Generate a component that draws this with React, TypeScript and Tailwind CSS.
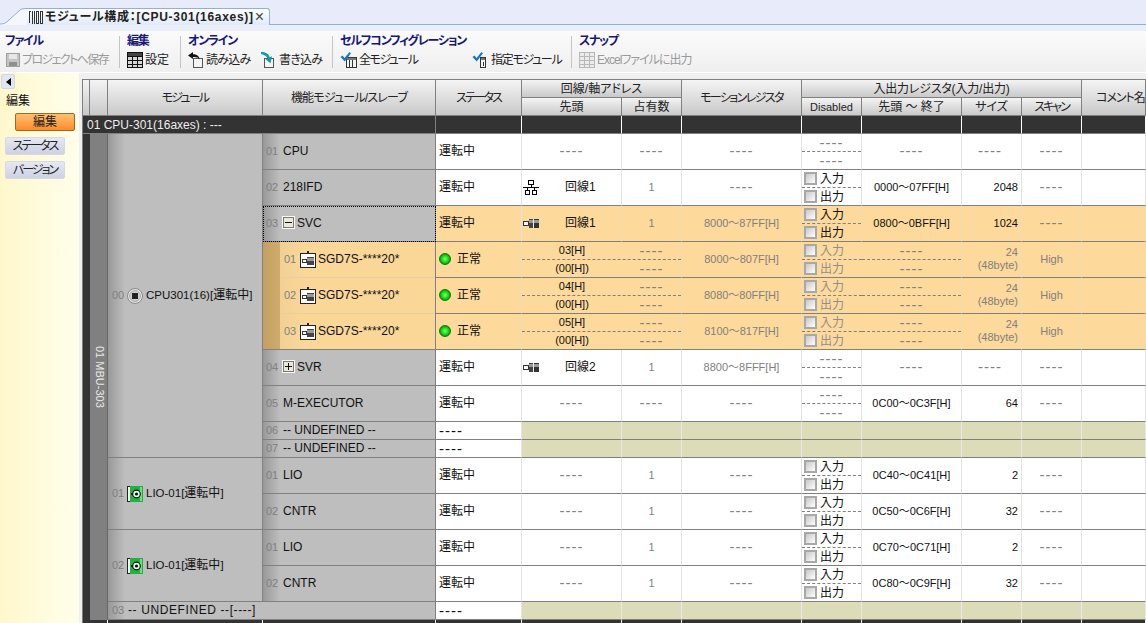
import React from 'react';

type Kind = 'plain' | 'active' | 'sub' | 'lastSub';

const Dash = ({ className = 'text-[#808080]' }: { className?: string }) => (
  <span className={`text-[15px] leading-none tracking-[1px] ${className}`}>----</span>
);

/* ---------- icons ---------- */
const TabIcon = () => (
  <svg width="15" height="13" viewBox="0 0 15 13" shapeRendering="crispEdges" className="shrink-0">
    <path d="M0 0h2v1H1v11H0zM3 0h1v13H3zM5 0h1v13H5zM7 0h3v13H7zM8 1v11h1V1zM11 0h3v13h-3zM12 1v11h1V1z" fill="#333" fillRule="evenodd" />
  </svg>
);
const SaveIcon = () => (
  <svg width="14" height="14" viewBox="0 0 14 14" shapeRendering="crispEdges" className="shrink-0">
    <rect x="0.5" y="0.5" width="13" height="13" fill="#c4c4c4" stroke="#a0a0a0" />
    <rect x="3" y="1" width="8" height="5" fill="#e8e8e8" />
    <rect x="3" y="9" width="8" height="4" fill="#8f8f8f" />
  </svg>
);
const TableIcon = ({ dim = false }: { dim?: boolean }) => (
  <svg width="16" height="16" viewBox="0 0 16 16" shapeRendering="crispEdges" className="shrink-0">
    <rect x="0.5" y="0.5" width="15" height="15" fill={dim ? '#ececec' : '#d8d8d8'} stroke={dim ? '#b8b8b8' : '#111'} />
    <path d="M5.5 1v14M10.5 1v14M1 4.5h14M1 8.5h14M1 12.5h14" stroke={dim ? '#b8b8b8' : '#111'} />
    {!dim && <rect x="1" y="1" width="14" height="3" fill="#444" />}
  </svg>
);
const ReadIcon = () => (
  <svg width="16" height="16" viewBox="0 0 16 16" className="shrink-0">
    <path d="M5.5 6.5h9v9h-9z" fill="#f4f4f4" stroke="#555" shapeRendering="crispEdges" />
    <path d="M0 3.5 5 0v2.2c3.6 0 6.2 1.4 6.6 5.2-1.4-2-3.4-2.6-6.6-2.4V7z" fill="#111" />
  </svg>
);
const WriteIcon = () => (
  <svg width="16" height="16" viewBox="0 0 16 16" className="shrink-0">
    <path d="M3.5 6.5h9v9h-9z" fill="#f4f4f4" stroke="#555" shapeRendering="crispEdges" />
    <path d="M0 0c4.6 0 7.6 1.4 8.8 5.2L11 4.2l-1.4 7-5-3.6 2-.8C5.8 4.4 3.6 2.6 0 2z" fill="#0f9aa8" />
  </svg>
);
const CheckModuleIcon = ({ wide = true }: { wide?: boolean }) => (
  <svg width="17" height="16" viewBox="0 0 17 16" className="shrink-0">
    {wide ? (
      <g shapeRendering="crispEdges">
        <rect x="6.5" y="5.5" width="10" height="10" fill="#f4f4f4" stroke="#333" />
        <path d="M9.5 6v9M12.5 6v9" stroke="#333" />
        <rect x="7" y="6" width="9" height="2" fill="#777" />
      </g>
    ) : (
      <g shapeRendering="crispEdges">
        <rect x="8.5" y="5.5" width="5" height="10" fill="#f4f4f4" stroke="#333" />
        <rect x="9" y="6" width="4" height="2" fill="#777" />
        <path d="M11 10v4" stroke="#333" />
      </g>
    )}
    <path d="M0.5 5 2.5 3.5 4.5 6 9.5 0 11 1.2 4.7 9.5z" fill="#1878c8" />
  </svg>
);
const NetworkIcon = () => (
  <svg width="16" height="15" viewBox="0 0 16 15" shapeRendering="crispEdges" className="shrink-0">
    <path d="M5.5.5h5v4h-5zM2.5 10.5h4v4h-4zM9.5 10.5h4v4h-4z" fill="#fff" stroke="#000" />
    <path d="M8 5v2M0 7.5h16M4.5 8v2M11.5 8v2" stroke="#000" />
  </svg>
);
const PlugIcon = () => (
  <svg width="16" height="9" viewBox="0 0 16 9" shapeRendering="crispEdges" className="shrink-0">
    <rect x="0.5" y="2.5" width="5" height="4" fill="#fff" stroke="#333" />
    <rect x="6" y="0" width="5" height="9" fill="#444" />
    <rect x="11" y="0" width="5" height="9" fill="#333" />
    <rect x="6" y="1" width="10" height="3" fill="#9a9a9a" />
    <path d="M10.5 0v9" stroke="#eee" />
  </svg>
);
const ServoIcon = () => (
  <svg width="16" height="17" viewBox="0 0 16 17" shapeRendering="crispEdges" className="shrink-0">
    <rect x="7" y="0" width="2" height="3" fill="#222" />
    <rect x="0.5" y="2.5" width="15" height="14" rx="1" fill="#fff" stroke="#222" />
    <rect x="2.5" y="8.5" width="4" height="3" fill="#fff" stroke="#333" />
    <rect x="7" y="6" width="7" height="8" fill="#444" />
    <rect x="7" y="7" width="7" height="3" fill="#9a9a9a" />
  </svg>
);
const CpuIcon = () => (
  <svg width="16" height="16" viewBox="0 0 16 16" className="shrink-0">
    <circle cx="8" cy="8" r="7.5" fill="#e8e8e8" stroke="#888" />
    <circle cx="8" cy="8" r="5.5" fill="#d0d0d0" stroke="#aaa" />
    <rect x="5" y="5" width="6" height="6" fill="#222" />
  </svg>
);
const LioIcon = () => (
  <svg width="16" height="16" viewBox="0 0 16 16" className="shrink-0">
    <rect x="3" y="0" width="13" height="16" fill="#22b040" shapeRendering="crispEdges" />
    <rect x="13" y="1" width="2" height="14" fill="#6fdc80" shapeRendering="crispEdges" />
    <path d="M3 .5H.5v15H3" fill="#f4f4f4" stroke="#222" shapeRendering="crispEdges" />
    <circle cx="9.5" cy="8" r="3.8" fill="#e8f8ea" stroke="#111" strokeWidth="1.2" />
    <circle cx="9.5" cy="8" r="1.6" fill="#111" />
    <rect x="4" y="7" width="2" height="2" fill="#111" />
  </svg>
);
const TreeBox = ({ plus = false }: { plus?: boolean }) => (
  <svg width="13" height="13" viewBox="0 0 13 13" shapeRendering="crispEdges" className="shrink-0">
    <rect x="0.5" y="0.5" width="12" height="12" fill="#f0ece2" stroke="#fafafa" />
    <rect x="1.5" y="1.5" width="10" height="10" fill="#ece8dc" stroke="#777" />
    <path d="M3 6.5h7" stroke="#111" />
    {plus && <path d="M6.5 3v7" stroke="#111" />}
  </svg>
);
const Led = () => (
  <span className="w-[12px] h-[12px] rounded-full shrink-0 bg-[radial-gradient(circle,#8cff8c_0%,#22ee22_35%,#0a9a0a_75%,#086a08_100%)] border border-[#0a7a0a]" />
);
const Checkbox = () => (
  <span className="w-[13px] h-[13px] shrink-0 border-2 border-[#a8a8a8] bg-gradient-to-br from-[#c8c8c8] to-white" />
);

/* ---------- top ---------- */
const TabBar = () => (
  <div className="h-[25px] bg-[#e8ecfa] border-b border-[#8fb0d8] flex items-end shrink-0">
    <svg width="27" height="17" viewBox="0 0 27 17" className="shrink-0 -mb-px">
      <path d="M0 16 C4 16 6 15 9 12 L20 2 C21 1 23 0.5 27 0.5 V17 H0z" fill="#f4f8fd" />
      <path d="M0 16 C4 16 6 15 9 12 L20 2 C21 1 23 0.5 27 0.5" fill="none" stroke="#8fb0d8" />
    </svg>
    <div className="w-[243px] h-[17px] -mb-px pl-[2px] flex items-center gap-px border-t border-r border-[#8fb0d8] rounded-tr-[3px] bg-gradient-to-b from-white to-[#dfeaf8] font-bold text-[#222] whitespace-nowrap">
      <TabIcon />
      <span className="tracking-[0.7px]">モジュール構成：[CPU-301(16axes)]</span>
      <span className="text-[#444] font-normal text-[16px] leading-none">×</span>
    </div>
  </div>
);

const RibbonItem = ({ icon, label, dim = false, className = '', textClass = '' }: { icon: React.ReactNode; label: string; dim?: boolean; className?: string; textClass?: string }) => (
  <div className={`flex items-center gap-[2px] h-[18px] whitespace-nowrap ${dim ? 'text-[#9a9a9a]' : 'text-[#222]'} ${className}`}>
    {icon}
    <span className={textClass}>{label}</span>
  </div>
);

const Group = ({ title, className, children }: { title: string; className: string; children: React.ReactNode }) => (
  <div className={`pt-[3px] shrink-0 ${className}`}>
    <div className="h-[14px] leading-[14px] font-bold text-[#17177a] whitespace-nowrap tracking-[-1.2px]">{title}</div>
    <div className="flex mt-[3px]">{children}</div>
  </div>
);

const Sep = () => <div className="w-px h-[32px] mt-[5px] bg-[#c4c4c4] shrink-0" />;

const Ribbon = () => (
  <div className="h-[48px] shrink-0 border-t-[6px] border-[#eaeef9] border-b border-b-white bg-gradient-to-b from-[#fbfbfb] to-[#efefef] flex">
    <Group title="ファイル" className="w-[119px] pl-[5px]">
      <RibbonItem dim icon={<SaveIcon />} label="プロジェクトへ保存" className="ml-[1px]" textClass="tracking-[-1.6px]" />
    </Group>
    <Sep />
    <Group title="編集" className="w-[60px] pl-[7px]">
      <RibbonItem icon={<TableIcon />} label="設定" />
    </Group>
    <Sep />
    <Group title="オンライン" className="w-[151px] pl-[7px]">
      <RibbonItem icon={<ReadIcon />} label="読み込み" className="w-[73px]" textClass="tracking-[-0.7px]" />
      <RibbonItem icon={<WriteIcon />} label="書き込み" className="gap-[1px]" textClass="tracking-[-0.7px]" />
    </Group>
    <Sep />
    <Group title="セルフコンフィグレーション" className="w-[238px] pl-[7px]">
      <RibbonItem icon={<CheckModuleIcon />} label="全モジュール" className="w-[133px] gap-[1px]" textClass="tracking-[-1.5px]" />
      <RibbonItem icon={<CheckModuleIcon wide={false} />} label="指定モジュール" className="-ml-px" textClass="tracking-[-1.3px]" />
    </Group>
    <Sep />
    <Group title="スナップ" className="pl-[7px]">
      <RibbonItem dim icon={<TableIcon dim />} label="Excelファイルに出力" textClass="tracking-[-1px]" />
    </Group>
  </div>
);

const SideButton = ({ label, active = false }: { label: string; active?: boolean }) => (
  <div
    className={`w-[60px] h-[18px] flex items-center justify-center rounded-[2px] border whitespace-nowrap ${
      active
        ? 'ml-[10px] border-[#9a6a2a] bg-gradient-to-b from-[#ffc070] to-[#ff8a24] text-[#222]'
        : 'border-[#d6dae6] bg-gradient-to-b from-[#e6e9f3] to-[#cdd2e2] text-[#222] tracking-[-2px]'
    }`}
  >
    {label}
  </div>
);

const Sidebar = () => (
  <div className="w-[79px] shrink-0 bg-gradient-to-r from-[#fff7cc] to-[#fffeea] pl-[5px]">
    <div className="w-[14px] h-[15px] -ml-[4px] mt-[1px] bg-[#e0e6f2] border border-[#cfd6e6] rounded-[2px] flex items-center justify-center">
      <span className="w-0 h-0 border-y-[4px] border-y-transparent border-r-[5px] border-r-black" />
    </div>
    <div className="mt-[5px] h-[14px] leading-[14px] ml-px text-[#111]">編集</div>
    <div className="flex flex-col gap-[6px] mt-[5px]">
      <SideButton label="編集" active />
      <SideButton label="ステータス" />
      <SideButton label="バージョン" />
    </div>
  </div>
);

/* ---------- grid cells ---------- */
const hd = 'flex items-center justify-center whitespace-nowrap overflow-hidden border-r border-b border-[#808080] bg-gradient-to-b from-[#f4f4f4] to-[#c9c9c9] text-[#222]';

const Header = () => (
  <>
    <div className={`${hd} row-span-2`} />
    <div className={`${hd} row-span-2`} />
    <div className={`${hd} row-span-2 tracking-[-1.8px]`}>モジュール</div>
    <div className={`${hd} row-span-2 tracking-[-0.8px]`}>機能モジュール/スレーブ</div>
    <div className={`${hd} row-span-2 tracking-[-2px]`}>ステータス</div>
    <div className={`${hd} col-span-2`}>回線/軸アドレス</div>
    <div className={`${hd} row-span-2 tracking-[-1.6px]`}>モーションレジスタ</div>
    <div className={`${hd} col-span-4 tracking-[-0.2px]`}>入出力レジスタ(入力/出力)</div>
    <div className={`${hd} row-span-2 !justify-start pl-[14px] tracking-[-1px]`}>コメント名称</div>
    <div className={hd}>先頭</div>
    <div className={hd}>占有数</div>
    <div className={`${hd} text-[11px]`}>Disabled</div>
    <div className={hd}>先頭 ～ 終了</div>
    <div className={hd}>サイズ</div>
    <div className={`${hd} tracking-[-2px]`}>スキャン</div>
  </>
);

const DarkRow = () => (
  <>
    <div className="col-span-4 bg-[#333] border-b border-[#808080] text-[#eee] pl-[4px] flex items-center whitespace-nowrap border-r">
      01 CPU-301(16axes) : ---
    </div>
    {[0, 1, 2, 3, 4, 5, 6, 7, 8].map(i => (
      <div key={i} className="bg-[#333] border-r border-white border-b border-b-[#808080]" />
    ))}
  </>
);

const bandCls = 'w-[17px] shrink-0 self-stretch flex items-center pl-[3px] pb-[2px] text-[11px] text-[#808080] bg-gradient-to-r from-[#999] to-[#bebebe]';

const ModuleCell = ({ n, icon, children, span }: { n: string; icon: React.ReactNode; children: React.ReactNode; span: string }) => (
  <div className={`${span} flex items-center bg-[#bebebe] border-r border-b border-[#808080] whitespace-nowrap`}>
    <div className={`${bandCls} !pl-[4px]`}>{n}</div>
    <div className="flex items-center gap-[3px] pl-[2px] text-[#111]">
      {icon}
      <span className="pb-[2px] text-[11.5px]">{children}</span>
    </div>
  </div>
);

const FuncCell = ({ n, kind, tree, name }: { n: string; kind: Kind; tree?: 'plus' | 'minus'; name: string }) => {
  if (kind === 'sub' || kind === 'lastSub') {
    return (
      <div className={`flex bg-[#fad797] border-r border-[#808080] ${kind === 'lastSub' ? 'border-b' : ''}`}>
        <div className="w-[17px] shrink-0 bg-gradient-to-r from-[#c39f60] to-[#cfac6e]" />
        <div className={`flex-1 flex items-center bg-gradient-to-r from-[#f2d093] to-[#fad797] from-0% to-[15%] ${kind === 'sub' ? 'border-b border-[#e6cfa4]' : ''}`}>
          <span className="w-[20px] pl-[4px] pb-[2px] text-[11px] text-[#808080]">{n}</span>
          <ServoIcon />
          <span className="ml-[2px] pb-[2px] whitespace-nowrap text-[#111]">{name}</span>
        </div>
      </div>
    );
  }
  return (
    <div className={`flex items-center bg-[#bebebe] border-r border-b border-[#808080] whitespace-nowrap text-[#111] ${kind === 'active' ? 'outline-1 outline-dotted outline-black -outline-offset-1' : ''}`}>
      <div className={bandCls}>{n}</div>
      {tree ? (
        <div className="flex items-center gap-[2px] pl-[2px] pb-[2px]">
          <TreeBox plus={tree === 'plus'} />
          <span>{name}</span>
        </div>
      ) : (
        <span className="pl-[3px] pb-[2px]">{name}</span>
      )}
    </div>
  );
};

const lightCell = (kind: Kind) => (kind === 'plain' ? 'bg-white border-r-[#e3e3e3]' : 'bg-[#fdd99b] border-r-[#f0dcb4]');

const Cell = ({ kind, className = '', children }: { kind: Kind; className?: string; children?: React.ReactNode }) => (
  <div className={`flex items-center justify-center whitespace-nowrap border-r border-b border-b-[#808080] pb-[2px] ${lightCell(kind)} ${className}`}>
    {children}
  </div>
);

const CheckPair = ({ dim = false }: { dim?: boolean }) => (
  <div className={`w-full h-full flex flex-col ${dim ? 'text-[#8f8f8f]' : 'text-[#111]'}`}>
    <div className="h-[18px] flex items-center gap-[3px] pl-[2px] border-b border-dashed border-[#808080]">
      <Checkbox />
      入力
    </div>
    <div className="flex-1 flex items-center gap-[3px] pl-[2px]">
      <Checkbox />
      出力
    </div>
  </div>
);

const DashPair = () => (
  <div className="w-full h-full flex flex-col">
    <div className="h-[18px] flex items-center justify-center border-b border-dashed border-[#808080]">
      <Dash />
    </div>
    <div className="flex-1 flex items-center justify-center">
      <Dash />
    </div>
  </div>
);

type RowData = {
  n: string;
  name: string;
  kind?: Kind;
  tree?: 'plus' | 'minus';
  net?: 'network' | 'plug';
  line?: string;
  occ?: string;
  motion?: string;
  check?: boolean;
  range?: string;
  size?: string;
};

const Row = ({ n, name, kind = 'plain', tree, net, line, occ, motion, check, range, size }: RowData) => (
  <>
    <FuncCell n={n} kind={kind === 'active' ? 'active' : 'plain'} tree={tree} name={name} />
    <Cell kind={kind} className="!justify-start pl-[3px] !border-r-[#e3e3e3] text-[#111]">
      運転中
    </Cell>
    <Cell kind={kind}>
      {line ? (
        <div className="w-full flex items-center pl-px">
          <div className="w-[16px] flex justify-center shrink-0 translate-y-px">{net === 'network' ? <NetworkIcon /> : <PlugIcon />}</div>
          <span className="ml-[26px] text-[#111]">{line}</span>
        </div>
      ) : (
        <Dash />
      )}
    </Cell>
    <Cell kind={kind} className="text-[11px] text-[#808080]">
      {occ ?? <Dash />}
    </Cell>
    <Cell kind={kind} className="text-[11px] text-[#808080]">
      {motion ?? <Dash />}
    </Cell>
    <Cell kind={kind} className="!pb-0">
      {check ? <CheckPair /> : <DashPair />}
    </Cell>
    <Cell kind={kind} className="text-[11px] text-[#111]">
      {range ?? <Dash />}
    </Cell>
    <Cell kind={kind} className="!justify-end pr-[3px] text-[11px] text-[#111]">
      {size ?? (
        <span className="w-full text-center">
          <Dash />
        </span>
      )}
    </Cell>
    <Cell kind={kind}>
      <Dash />
    </Cell>
    <Cell kind={kind} />
  </>
);

const SubRow = ({ n, kind, axis, motion }: { n: string; kind: Kind; axis: string; motion: string }) => (
  <>
    <FuncCell n={n} kind={kind} name="SGD7S-****20*" />
    <Cell kind="active" className="!justify-start pl-[3px] gap-[6px] text-[#111] !border-r-[#f0dcb4]">
      <Led />
      正常
    </Cell>
    <Cell kind="active" className="col-span-2 !block !pb-0 text-[11px]">
      <div className="h-[18px] border-b border-dashed border-[#808080] grid grid-cols-[100px_1fr]">
        <span className="flex items-center justify-center pb-[2px] text-[#111]">{axis}</span>
        <span className="flex items-center justify-center">
          <Dash />
        </span>
      </div>
      <div className="h-[17px] grid grid-cols-[100px_1fr]">
        <span className="flex items-center justify-center pb-[2px] text-[#111]">(00[H])</span>
        <span className="flex items-center justify-center">
          <Dash />
        </span>
      </div>
    </Cell>
    <Cell kind="active" className="text-[11px] text-[#808080]">
      {motion}
    </Cell>
    <Cell kind="active" className="col-span-2 !block !pb-0">
      <div className="grid grid-cols-[60px_1fr] h-full">
        <CheckPair dim />
        <div className="flex flex-col">
          <div className="h-[18px] flex items-center justify-center border-b border-dashed border-[#808080]">
            <Dash />
          </div>
          <div className="flex-1 flex items-center justify-center">
            <Dash />
          </div>
        </div>
      </div>
    </Cell>
    <Cell kind="active" className="!flex-col !items-end pr-[3px] text-[11px] leading-[13px] text-[#808080]">
      <span>24</span>
      <span>(48byte)</span>
    </Cell>
    <Cell kind="active" className="text-[11px] text-[#808080]">
      High
    </Cell>
    <Cell kind="active" />
  </>
);

const UndefCells = () => (
  <>
    {[0, 1, 2, 3, 4, 5, 6, 7].map(i => (
      <div key={i} className="bg-[#dcdcb8] border-r border-r-[#e8e8e8] border-b border-b-[#808080]" />
    ))}
  </>
);

const UndefStatus = () => (
  <div className="bg-white border-r border-r-[#e3e3e3] border-b border-b-[#808080] flex items-center pl-[3px]">
    <Dash className="text-[#111]" />
  </div>
);

const UndefRow = ({ n }: { n: string }) => (
  <>
    <FuncCell n={n} kind="plain" name="-- UNDEFINED --" />
    <UndefStatus />
    <UndefCells />
  </>
);

const Jp = ({ children }: { children: React.ReactNode }) => <span className="text-[12px]">{children}</span>;

export default function App() {
  return (
    <div className="w-[1146px] h-[623px] overflow-hidden flex flex-col bg-[#f0f0f0] text-[12px] leading-[14px] font-['Liberation_Sans','Noto_Sans_CJK_JP',sans-serif] [font-feature-settings:'palt']">
      <TabBar />
      <Ribbon />
      <div className="flex-1 flex min-h-0">
        <Sidebar />
        <div className="flex-1 pl-[3px] pt-[6px] min-w-0">
          <div className="h-[544px] overflow-hidden border-l border-t border-[#808080] bg-[#333] grid grid-cols-[7px_18px_155px_173px_86px_100px_60px_120px_60px_100px_60px_60px_64px] grid-rows-[18px_18px_18px_repeat(8,36px)_18px_18px_repeat(4,36px)_18px_3px]">
            <Header />
            <DarkRow />
            <div className="row-span-16 bg-[#333] border-r border-[#333]" />
            <div className="row-span-15 bg-[#808080] border-r border-[#666] flex items-center justify-center">
              <span className="[writing-mode:vertical-rl] text-[11px] text-[#e8e8e8] whitespace-nowrap translate-x-px">01 MBU-303</span>
            </div>
            <ModuleCell n="00" icon={<CpuIcon />} span="row-span-10">
              CPU301(16)[<Jp>運転中</Jp>]
            </ModuleCell>
            <Row n="01" name="CPU" />
            <Row n="02" name="218IFD" net="network" line="回線1" occ="1" check range="0000～07FF[H]" size="2048" />
            <Row n="03" name="SVC" kind="active" tree="minus" net="plug" line="回線1" occ="1" motion="8000～87FF[H]" check range="0800～0BFF[H]" size="1024" />
            <SubRow n="01" kind="sub" axis="03[H]" motion="8000～807F[H]" />
            <SubRow n="02" kind="sub" axis="04[H]" motion="8080～80FF[H]" />
            <SubRow n="03" kind="lastSub" axis="05[H]" motion="8100～817F[H]" />
            <Row n="04" name="SVR" tree="plus" net="plug" line="回線2" occ="1" motion="8800～8FFF[H]" />
            <Row n="05" name="M-EXECUTOR" range="0C00～0C3F[H]" size="64" />
            <UndefRow n="06" />
            <UndefRow n="07" />
            <ModuleCell n="01" icon={<LioIcon />} span="row-span-2">
              LIO-01[<Jp>運転中</Jp>]
            </ModuleCell>
            <Row n="01" name="LIO" occ="1" check range="0C40～0C41[H]" size="2" />
            <Row n="02" name="CNTR" occ="1" check range="0C50～0C6F[H]" size="32" />
            <ModuleCell n="02" icon={<LioIcon />} span="row-span-2">
              LIO-01[<Jp>運転中</Jp>]
            </ModuleCell>
            <Row n="01" name="LIO" occ="1" check range="0C70～0C71[H]" size="2" />
            <Row n="02" name="CNTR" occ="1" check range="0C80～0C9F[H]" size="32" />
            <div className="col-span-2 flex items-center bg-[#bebebe] border-r border-b border-[#808080] whitespace-nowrap text-[#111]">
              <div className={`${bandCls} !pl-[4px]`}>03</div>
              <span className="pl-[3px] pb-[2px] tracking-[0.6px]">-- UNDEFINED --[----]</span>
            </div>
            <UndefStatus />
            <UndefCells />
            {[0, 1, 2, 3, 4, 5, 6, 7, 8, 9, 10, 11].map(i => (
              <div key={i} className="bg-[#333] border-r border-r-white" />
            ))}
          </div>
        </div>
      </div>
    </div>
  );
}
